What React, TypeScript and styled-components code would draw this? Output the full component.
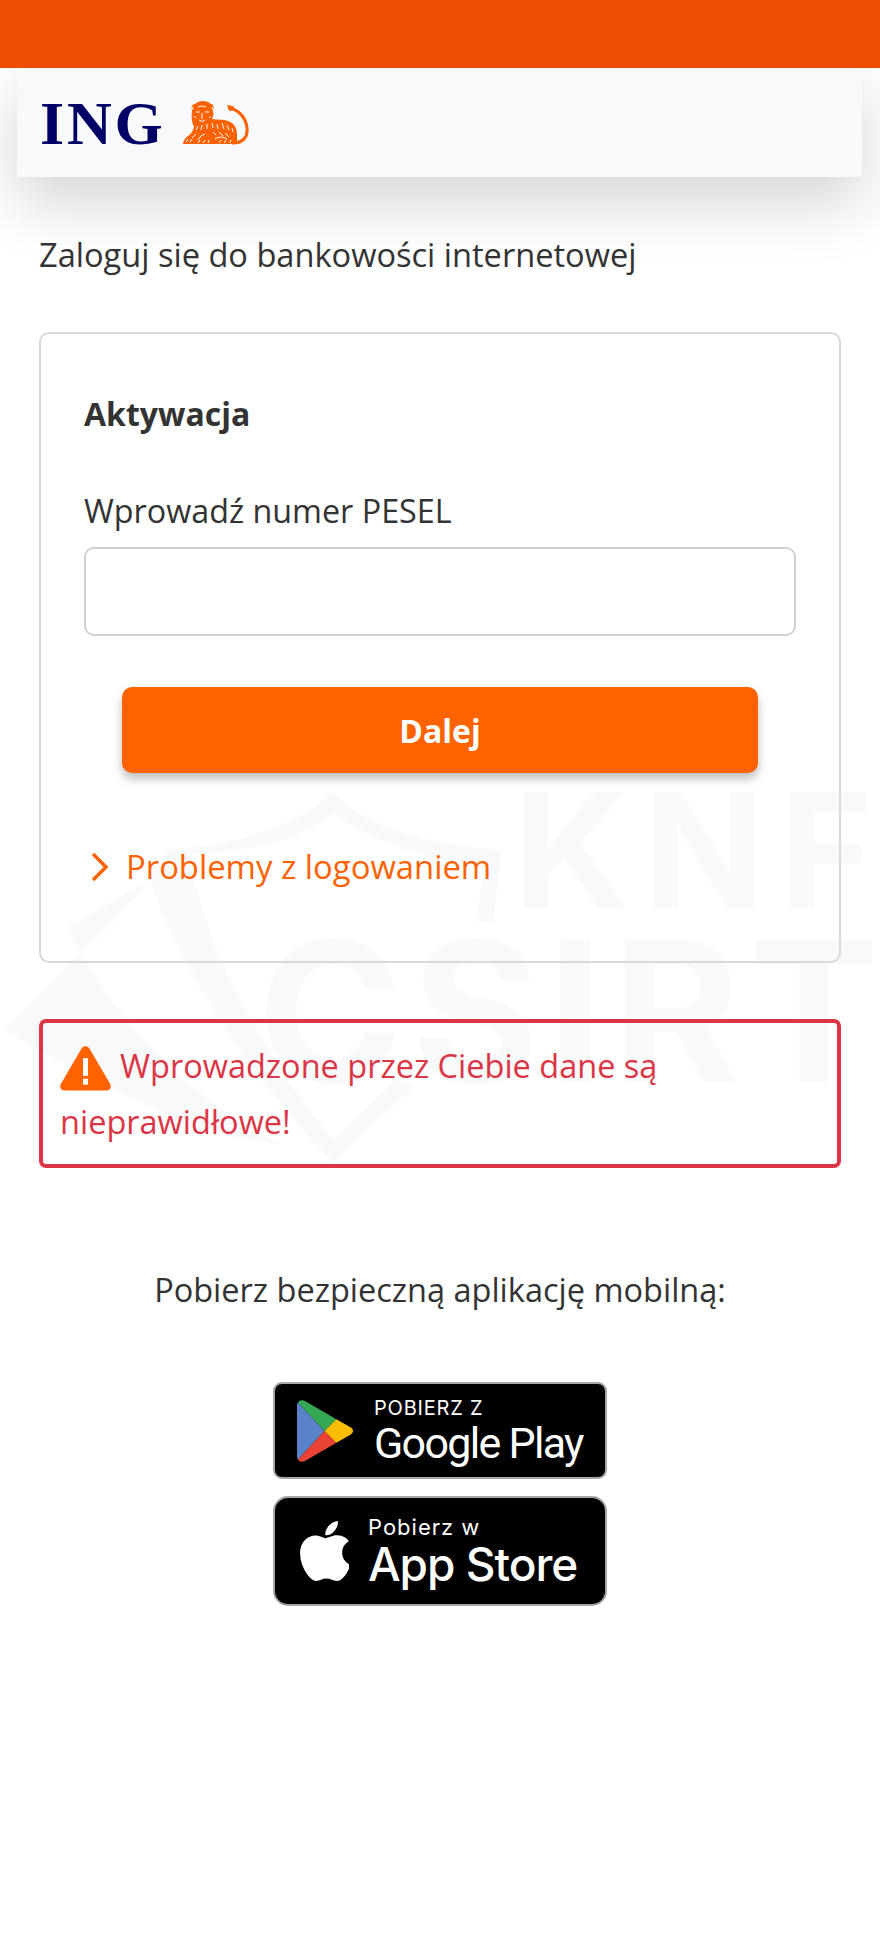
import React from "react";
import styled, { createGlobalStyle } from "styled-components";

const GlobalStyle = createGlobalStyle`
  html, body {
    margin: 0;
    padding: 0;
    background: #fff;
  }
  body {
    font-family: "Open Sans", "Noto Sans", sans-serif;
    color: #333;
  }
`;

const Page = styled.div`
  position: relative;
  width: 880px;
  height: 1953px;
  overflow: hidden;
  background: #fff;
`;

const Watermark = styled.svg`
  position: absolute;
  left: 0;
  top: 770px;
  width: 880px;
  height: 410px;
`;

const TopBar = styled.div`
  position: relative;
  z-index: 1;
  height: 68px;
  background: #ec4d00;
`;

const Header = styled.header`
  position: relative;
  display: flex;
  align-items: center;
  gap: 17px;
  height: 109px;
  margin: 0 18px 0 17px;
  padding: 0 23px;
  box-sizing: border-box;
  background: #f8f9fb;
  box-shadow: 0 24px 64px rgba(0, 0, 0, 0.175);
`;

const LogoText = styled.span`
  font-family: "Liberation Serif", serif;
  font-size: 62px;
  font-weight: 700;
  letter-spacing: 2.8px;
  color: #000066;
  line-height: 1;
`;

const Main = styled.main`
  position: relative;
  padding: 0 39px;
`;

const Intro = styled.h1`
  margin: 57px 0 0;
  font-size: 32.6px;
  line-height: 42px;
  font-weight: 400;
`;

const Card = styled.section`
  margin-top: 56px;
  height: 631px;
  box-sizing: border-box;
  padding: 60px 43px 0;
  border: 2px solid #d9d9d9;
  border-radius: 10px;
`;

const CardTitle = styled.h2`
  margin: 0;
  font-size: 32px;
  line-height: 40px;
  font-weight: 700;
`;

const FieldLabel = styled.label`
  display: block;
  margin-top: 54px;
  font-size: 32.3px;
  line-height: 44px;
`;

const TextInput = styled.input`
  display: block;
  box-sizing: border-box;
  width: 100%;
  height: 89px;
  margin-top: 15px;
  border: 2px solid #d0d0d0;
  border-radius: 10px;
  background: transparent;
`;

const SubmitButton = styled.button`
  display: block;
  width: 636px;
  height: 86px;
  margin: 51px auto 0;
  border: 0;
  border-radius: 10px;
  background: #ff6200;
  color: #fff;
  font: 700 32px "Open Sans", sans-serif;
  box-shadow: 0 6px 10px rgba(0, 0, 0, 0.25);
`;

const HelpLink = styled.a`
  display: flex;
  align-items: center;
  gap: 16px;
  margin: 72px 0 0 6px;
  font-size: 32.8px;
  line-height: 44px;
  color: #ff6200;
`;

const Alert = styled.div`
  margin-top: 56px;
  height: 149px;
  box-sizing: border-box;
  padding: 15px 17px 0;
  border: 4px solid #dc3545;
  border-radius: 7px;
  font-size: 32.5px;
  line-height: 56px;
  color: #dc3545;
`;

const AlertIcon = styled.svg`
  width: 51px;
  height: 46px;
  margin-right: 9px;
  vertical-align: -13px;
`;

const StoreSection = styled.div`
  display: flex;
  flex-direction: column;
  align-items: center;
  margin-top: 100px;
`;

const StoreTitle = styled.p`
  margin: 0 0 70px;
  font-size: 32.5px;
  line-height: 44px;
`;

const Badge = styled.div<{ $h: number; $radius: number; $gap: number; $pad: number; $iconGap: number }>`
  display: flex;
  align-items: center;
  box-sizing: border-box;
  width: 334px;
  height: ${(p) => p.$h}px;
  margin-bottom: ${(p) => p.$gap}px;
  padding-left: ${(p) => p.$pad}px;
  gap: ${(p) => p.$iconGap}px;
  background: #000;
  border: 2px solid #a6a6a6;
  border-radius: ${(p) => p.$radius}px;
  color: #fff;
`;

const BadgeLines = styled.div`
  display: flex;
  flex-direction: column;
`;

const PlaySmall = styled.span`
  font: 400 20px/24px Inter, sans-serif;
  letter-spacing: 0.8px;
`;

const PlayLarge = styled.span`
  font: 400 43px/46px Roboto, sans-serif;
  letter-spacing: -1.7px;
`;

const AppleSmall = styled.span`
  font: 400 22px/26px Inter, sans-serif;
  letter-spacing: 1px;
`;

const AppleLarge = styled.span`
  font: 500 46px/48px Inter, sans-serif;
  letter-spacing: -1px;
`;

const Lion = () => (
  <svg width="66" height="44" viewBox="0 0 66 44">
    <path
      fill="#ff6200"
      d="M9 10 C8 6 9 3 12 3 C14 1 17 0 20 0 C23 0 26 1 28 3 C31 3 31 7 30 10 C31 13 30 16 29 18 C34 19 40 18 45 20 C51 22 54 27 54 33 L54 43 L0 43 C0 40 2 37 5 35 C8 33 10 30 11 26 C9 22 8 16 9 10 Z"
    />
    <path
      fill="none"
      stroke="#ff6200"
      strokeWidth="3"
      strokeLinecap="round"
      d="M47 7 C55 9 63 16 64 27 C65 36 60 42 50 42"
    />
    <path fill="#ff6200" d="M44 4 L50 5 L52 9 L46 10 Z" />
    <path
      fill="none"
      stroke="#f8f9fb"
      strokeWidth="1"
      d="M13 11 h4 M22 11 h4 M15 6 q4 -2 8 0 M19 12 v6 M16 19 q3 3 6 0 M10 6 l-1 3 M29 6 l1 3 M11 15 l2 2 M28 15 l-2 2 M15 25 l-2 4 M19 24 l-1 5 M24 23 l0 5 M29 22 l1 5 M34 23 l1 5 M39 22 l2 6 M44 24 l2 5 M49 27 l1 4 M36 31 l4 4 M42 32 l4 4 M30 31 l3 3 M13 33 l-4 4 M22 33 q-5 1 -7 6 M3 41 l2 -3 M7 41 l2 -3 M15 42 l2 -3 M20 42 l2 -3 M25 42 l1 -3 M32 38 q6 -4 12 0 M36 42 l2 -3 M41 42 l2 -3 M47 42 l1 -3"
    />
  </svg>
);

const GooglePlayIcon = () => (
  <svg width="57" height="64" viewBox="0 0 58 64">
    <path fill="#5a82c8" d="M1 3 L28 32 L1 61 C0 60 0 58 0 56 L0 8 C0 6 0 4 1 3 Z" />
    <path fill="#34a853" d="M1 3 C3 0 6 0 9 2 L40 20 L28 32 Z" />
    <path fill="#ea4335" d="M1 61 L28 32 L40 44 L9 62 C6 64 3 64 1 61 Z" />
    <path fill="#fbbc04" d="M40 20 L54 28 C58 30 58 34 54 36 L40 44 L28 32 Z" />
  </svg>
);

const AppleIcon = () => (
  <svg width="49" height="60" viewBox="4 32 365 448">
    <path
      fill="#fff"
      d="M318.7 268.7c-.2-36.7 16.4-64.4 50-84.8-18.8-26.9-47.2-41.7-84.7-44.6-35.5-2.8-74.3 20.7-88.5 20.7-15 0-49.4-19.7-76.4-19.7C63.3 141.2 4 184.8 4 273.5q0 39.3 14.4 81.2c12.8 36.7 59 126.7 107.2 125.2 25.2-.6 43-17.9 75.8-17.9 31.8 0 48.3 17.9 76.4 17.9 48.6-.7 90.4-82.5 102.6-119.3-65.2-30.7-61.7-90-61.7-91.9zm-56.6-164.2c27.3-32.4 24.8-61.9 24-72.5-24.1 1.4-52 16.4-67.9 34.9-17.5 19.8-27.8 44.3-25.6 71.9 26.1 2 49.9-11.4 69.5-34.3z"
    />
  </svg>
);

export default function App() {
  return (
    <Page>
      <GlobalStyle />
      <Watermark viewBox="0 0 880 410">
        <g fill="#f8f9fb">
          <path d="M333 22 C370 60 430 75 502 80 L493 153 L476 151 L485 97 C420 88 370 70 333 43 C300 70 250 82 190 84 L167 80 C240 75 300 55 333 22 Z" />
          <path d="M167 80 L190 84 C200 170 260 280 333 370 L333 392 C260 320 180 200 150 110 Z" />
          <path d="M150 110 L68 157 C100 235 200 340 283 375 C180 365 60 290 3 260 L68 195 C100 165 130 135 150 110 Z" />
          <path d="M333 392 L415 315 L395 310 L333 370 Z" />
        </g>
        <text x="514" y="138" fontFamily="Inter, sans-serif" fontWeight="700" fontSize="160" letterSpacing="14" fill="#f8f9fb">
          KNF
        </text>
        <text x="258" y="312" fontFamily="Inter, sans-serif" fontWeight="700" fontSize="195" letterSpacing="9" fill="#f8f9fb">
          CSIRT
        </text>
      </Watermark>
      <TopBar />
      <Header>
        <LogoText>ING</LogoText>
        <Lion />
      </Header>
      <Main>
        <Intro>Zaloguj się do bankowości internetowej</Intro>
        <Card>
          <CardTitle>Aktywacja</CardTitle>
          <FieldLabel>Wprowadź numer PESEL</FieldLabel>
          <TextInput />
          <SubmitButton>Dalej</SubmitButton>
          <HelpLink>
            <svg width="20" height="30" viewBox="0 0 20 30">
              <path fill="none" stroke="#ff6200" strokeWidth="3.5" d="M3 2 L16 15 L3 28" />
            </svg>
            Problemy z logowaniem
          </HelpLink>
        </Card>
        <Alert>
          <AlertIcon viewBox="0 0 52 46">
            <path fill="#ff6200" d="M22 3 C24 0 28 0 30 3 L51 39 C53 43 51 46 47 46 L5 46 C1 46 -1 43 1 39 Z" />
            <rect x="23.5" y="13" width="5" height="18" fill="#fff" />
            <rect x="23.5" y="34" width="5" height="6" fill="#fff" />
          </AlertIcon>
          Wprowadzone przez Ciebie dane są nieprawidłowe!
        </Alert>
        <StoreSection>
          <StoreTitle>Pobierz bezpieczną aplikację mobilną:</StoreTitle>
          <Badge $h={97} $radius={9} $gap={17} $pad={22} $iconGap={20}>
            <GooglePlayIcon />
            <BadgeLines>
              <PlaySmall>POBIERZ Z</PlaySmall>
              <PlayLarge>Google Play</PlayLarge>
            </BadgeLines>
          </Badge>
          <Badge $h={110} $radius={15} $gap={0} $pad={25} $iconGap={19}>
            <AppleIcon />
            <BadgeLines>
              <AppleSmall>Pobierz w</AppleSmall>
              <AppleLarge>App Store</AppleLarge>
            </BadgeLines>
          </Badge>
        </StoreSection>
      </Main>
    </Page>
  );
}
